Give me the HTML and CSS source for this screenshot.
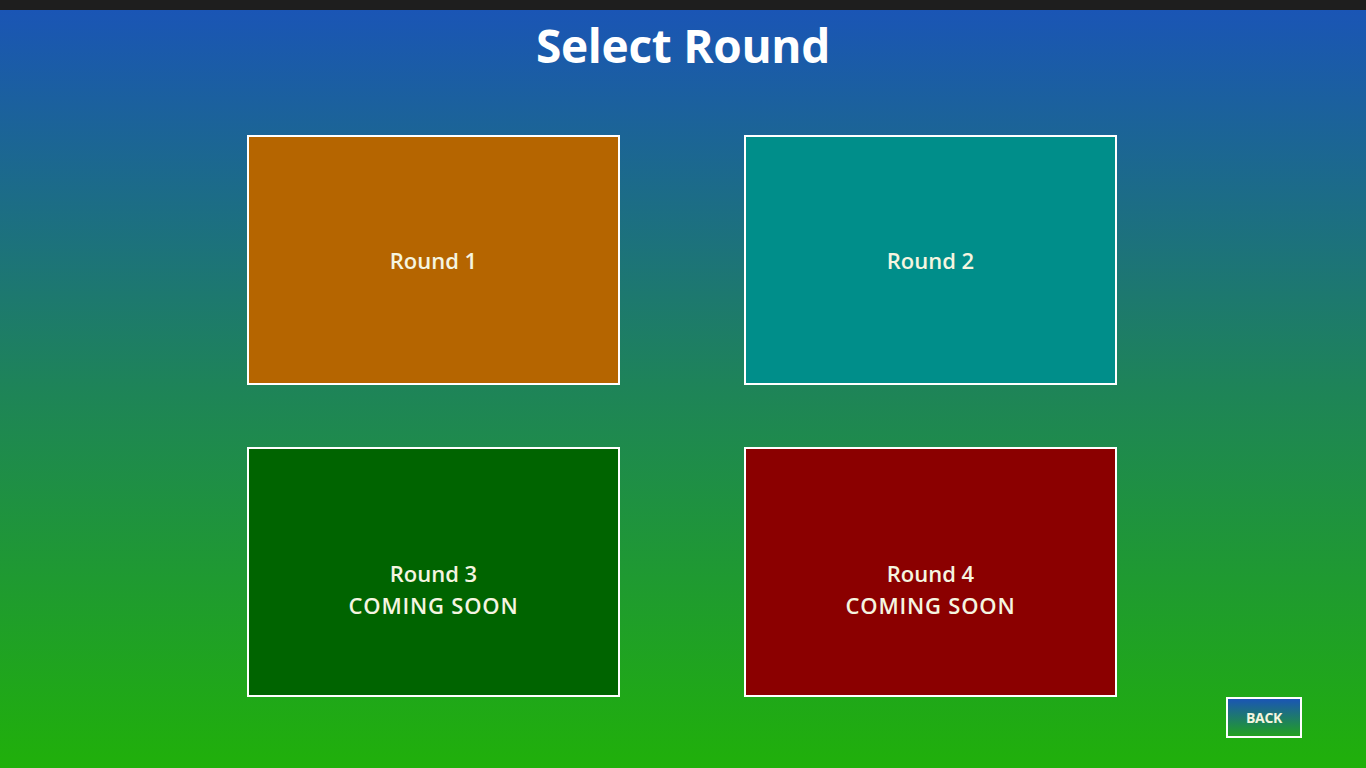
FILE: index.html
```html
<!DOCTYPE html>
<html>
<head>
<meta charset="utf-8">
<link rel="stylesheet" href="styles.css">
</head>
<body>
<div class="topbar"></div>
<main class="page">
  <h1 class="title">Select Round</h1>
  <div class="grid">
    <div class="tile tile-orange"><span>Round 1</span></div>
    <div class="tile tile-teal"><span>Round 2</span></div>
    <div class="tile tile-green tile-soon"><span>Round 3<br><span class="soon">COMING SOON</span></span></div>
    <div class="tile tile-red tile-soon"><span>Round 4<br><span class="soon">COMING SOON</span></span></div>
  </div>
  <div class="footer">
    <button class="back">BACK</button>
  </div>
</main>
</body>
</html>
```

FILE: styles.css
```css
html, body {
  margin: 0;
  padding: 0;
  height: 100%;
}
body {
  width: 1366px;
  height: 768px;
  overflow: hidden;
  font-family: "Open Sans", "Noto Sans", sans-serif;
  display: flex;
  flex-direction: column;
}
.topbar {
  height: 10px;
  background: #1e1e1e;
  flex: none;
}
.page {
  flex: 1;
  display: flex;
  flex-direction: column;
  align-items: center;
  background: linear-gradient(to bottom, #1a55b5 0%, #1e8458 50%, #20b00a 100%);
}
.title {
  margin: 0;
  padding-top: 9px;
  height: 55px;
  line-height: 53px;
  font-size: 46px;
  font-weight: 700;
  color: #ffffff;
  letter-spacing: -0.3px;
}
.grid {
  margin-top: 61px;
  margin-right: 2px;
  display: grid;
  grid-template-columns: 373px 373px;
  grid-template-rows: 250px 250px;
  column-gap: 124px;
  row-gap: 62px;
}
.tile {
  box-sizing: border-box;
  border: 2px solid #ffffff;
  display: flex;
  align-items: center;
  justify-content: center;
  text-align: center;
  color: #f5f5e0;
  font-size: 22px;
  font-weight: 600;
  line-height: 32px;
}
.tile-soon {
  padding-top: 34px;
}
.soon {
  letter-spacing: 0.8px;
}
.tile-orange { background: #b56500; }
.tile-teal { background: #008e8a; }
.tile-green { background: #006400; }
.tile-red { background: #8b0000; }
.footer {
  align-self: stretch;
  display: flex;
  justify-content: flex-end;
  padding-right: 64px;
  margin-top: 0;
}
.back {
  box-sizing: border-box;
  width: 76px;
  height: 41px;
  border: 2px solid #ffffff;
  background: linear-gradient(to bottom, #1a55b5, #22a020);
  color: #f5f5e0;
  font-family: "Open Sans", "Noto Sans", sans-serif;
  font-size: 14px;
  font-weight: 700;
  padding: 0;
  letter-spacing: -0.3px;
}
```
